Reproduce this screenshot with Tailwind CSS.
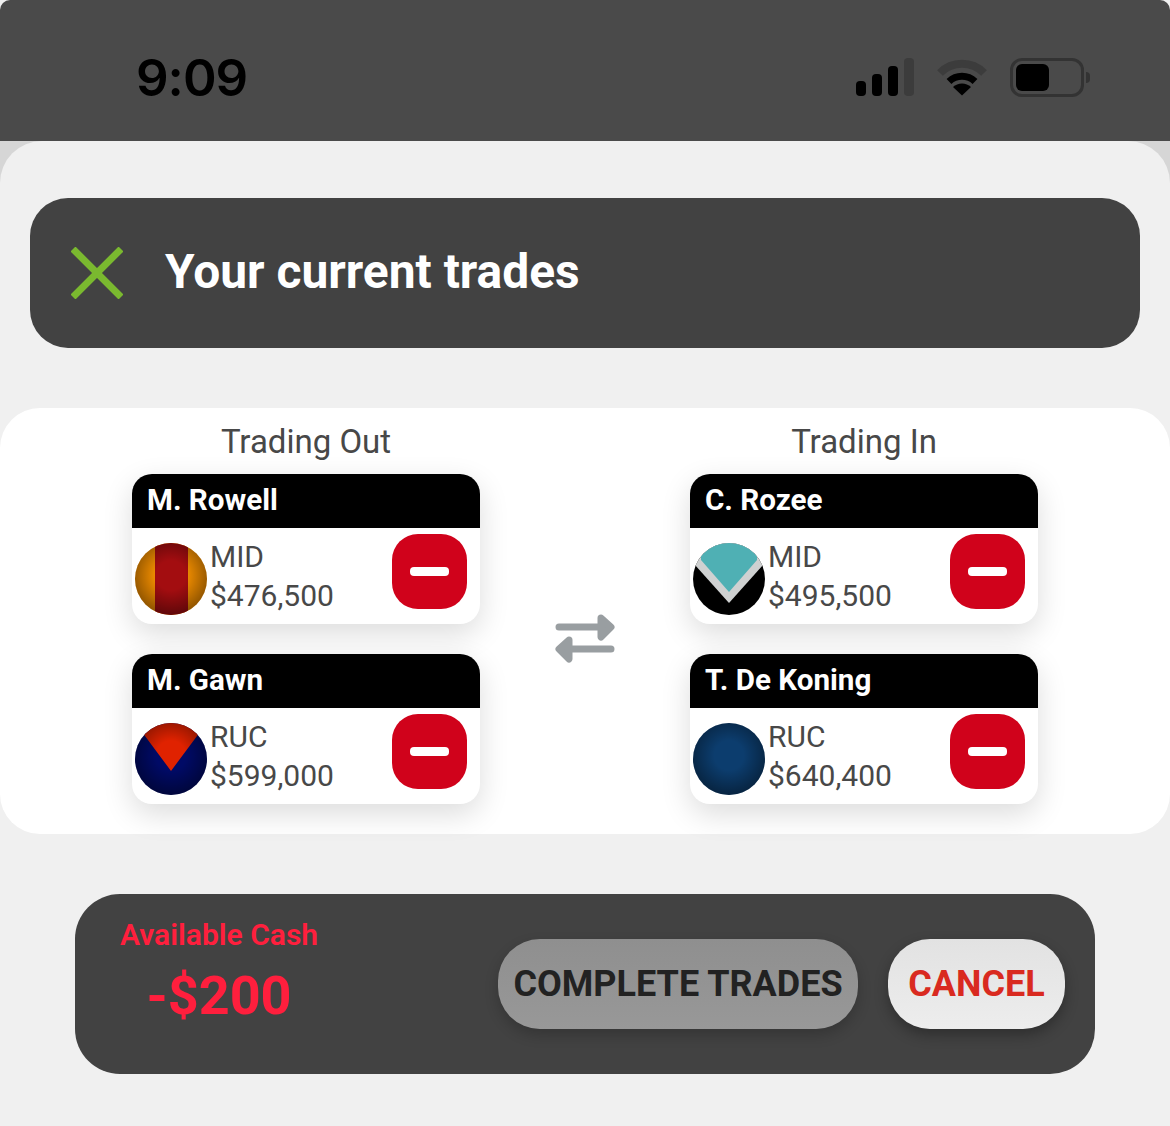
<!DOCTYPE html>
<html lang="en">
<head>
  <meta charset="UTF-8" />
  <meta name="viewport" content="width=device-width, initial-scale=1.0" />
  <title>Your current trades</title>
  <script src="https://cdn.jsdelivr.net/npm/@tailwindcss/browser@4"></script>
</head>
<body class="bg-[#f0f0f0] font-['Roboto',sans-serif] h-[1126px] overflow-hidden">
  <!-- status bar -->
  <div class="h-[141px] bg-[#4a4a4a] rounded-t-[10px] flex items-center justify-between pl-[136px] pr-[80px] pt-[13px]">
    <div class="font-['Inter',sans-serif] font-semibold text-[51px] leading-none text-black tracking-[-1px]">9:09</div>
    <div class="flex items-center gap-[23px]">
      <svg width="58" height="38" viewBox="0 0 58 38">
        <rect x="0" y="23" width="10" height="15" rx="4" fill="#000" />
        <rect x="16" y="16" width="10" height="22" rx="4" fill="#000" />
        <rect x="32" y="8" width="10" height="30" rx="4" fill="#000" />
        <rect x="48" y="0" width="10" height="38" rx="4" fill="#3c3c3c" />
      </svg>
      <svg width="50" height="38" viewBox="0 0 50 38">
        <path d="M3 15 A31 31 0 0 1 47 15" fill="none" stroke="#3c3c3c" stroke-width="8" />
        <path d="M12 23.5 A19 19 0 0 1 38 23.5" fill="none" stroke="#000" stroke-width="7" />
        <path d="M25 37.5 L16 29 A13 13 0 0 1 34 29 Z" fill="#000" />
      </svg>
      <div class="flex items-center gap-[2px]">
        <div class="w-[74px] h-[39px] rounded-[12px] border-[3px] border-[#333] p-[3px]">
          <div class="w-[33px] h-full rounded-[6px] bg-black"></div>
        </div>
        <div class="w-[4px] h-[11px] rounded-r-full bg-[#333]"></div>
      </div>
    </div>
  </div>

  <div class="bg-[#d6d6d6]">
    <div class="bg-[#f0f0f0] rounded-t-[42px] pt-[57px] h-[985px]">
      <!-- header -->
      <div class="mx-[30px] h-[150px] rounded-[38px] bg-[#424242] flex items-center pl-[41px] gap-[42px]">
        <svg width="52" height="52" viewBox="0 0 52 52">
          <path d="M2 2 L50 50 M50 2 L2 50" stroke="#7ab92f" stroke-width="7" fill="none" />
        </svg>
        <h1 class="text-[47.9px] font-bold text-white leading-none">Your current trades</h1>
      </div>

      <!-- trades -->
      <div class="mt-[60px] h-[426px] bg-white rounded-[40px] flex pl-[132px]">
        <div class="w-[348px]">
          <div class="h-[66px] pt-[15px] text-center text-[33px] leading-[38px] text-[#484848]">Trading Out</div>
          <div class="flex flex-col gap-[30px]">
            <div class="h-[150px] rounded-[20px] bg-white overflow-hidden shadow-[0_10px_30px_rgba(0,0,0,0.14)]">
              <div class="h-[54px] bg-black pl-[15px] pb-[2px] flex items-center text-[29.6px] font-bold text-white">M. Rowell</div>
              <div class="flex items-center pl-[3px] pr-[13px] h-[96px]">
                <svg class="mt-[6px]" width="72" height="72" viewBox="0 0 72 72">
                  <defs>
                    <radialGradient id="shade" cx="50%" cy="45%" r="58%">
                      <stop offset="35%" stop-color="#000" stop-opacity="0" />
                      <stop offset="100%" stop-color="#000" stop-opacity="0.45" />
                    </radialGradient>
                    <clipPath id="disc"><circle cx="36" cy="36" r="36" /></clipPath>
                  </defs>
                  <g clip-path="url(#disc)">
                    <rect width="72" height="72" fill="#f28e00" />
                    <rect x="20" width="33" height="72" fill="#a30d10" />
                    <rect width="72" height="72" fill="url(#shade)" />
                  </g>
                </svg>
                <div class="ml-[3px] text-[30px] leading-[39px] text-[#484848] mt-[-1px]">
                  <div>MID</div>
                  <div>$476,500</div>
                </div>
                <button class="ml-auto mt-[-10px] w-[75px] h-[75px] rounded-[26px] bg-[#d0021b] flex items-center justify-center">
                  <span class="block w-[39px] h-[9px] rounded-[4px] bg-white"></span>
                </button>
              </div>
            </div>
            <div class="h-[150px] rounded-[20px] bg-white overflow-hidden shadow-[0_10px_30px_rgba(0,0,0,0.14)]">
              <div class="h-[54px] bg-black pl-[15px] pb-[2px] flex items-center text-[29.6px] font-bold text-white">M. Gawn</div>
              <div class="flex items-center pl-[3px] pr-[13px] h-[96px]">
                <svg class="mt-[6px]" width="72" height="72" viewBox="0 0 72 72">
                  <g clip-path="url(#disc)">
                    <rect width="72" height="72" fill="#000a66" />
                    <path d="M4 5 L10 13 L36 48 L62 13 L68 5 L36 -4 Z" fill="#e02200" />
                    <rect width="72" height="72" fill="url(#shade)" />
                  </g>
                </svg>
                <div class="ml-[3px] text-[30px] leading-[39px] text-[#484848] mt-[-1px]">
                  <div>RUC</div>
                  <div>$599,000</div>
                </div>
                <button class="ml-auto mt-[-10px] w-[75px] h-[75px] rounded-[26px] bg-[#d0021b] flex items-center justify-center">
                  <span class="block w-[39px] h-[9px] rounded-[4px] bg-white"></span>
                </button>
              </div>
            </div>
          </div>
        </div>

        <div class="w-[210px] flex items-center justify-center pt-[34px]">
          <svg width="62" height="50" viewBox="0 0 62 50">
            <path d="M5 14 H46 M47 5 L57 14 L47 24 Z" fill="#999ea1" stroke="#999ea1" stroke-width="7" stroke-linejoin="round" stroke-linecap="round" />
            <path d="M57 36 H16 M15 27 L5 36 L15 46 Z" fill="#999ea1" stroke="#999ea1" stroke-width="7" stroke-linejoin="round" stroke-linecap="round" />
          </svg>
        </div>

        <div class="w-[348px]">
          <div class="h-[66px] pt-[15px] text-center text-[33px] leading-[38px] text-[#484848]">Trading In</div>
          <div class="flex flex-col gap-[30px]">
            <div class="h-[150px] rounded-[20px] bg-white overflow-hidden shadow-[0_10px_30px_rgba(0,0,0,0.14)]">
              <div class="h-[54px] bg-black pl-[15px] pb-[2px] flex items-center text-[29.6px] font-bold text-white">C. Rozee</div>
              <div class="flex items-center pl-[3px] pr-[13px] h-[96px]">
                <svg class="mt-[6px]" width="72" height="72" viewBox="0 0 72 72">
                  <g clip-path="url(#disc)">
                    <rect width="72" height="72" fill="#000" />
                    <path d="M2 22 L36 60 L70 22 L70 -2 L2 -2 Z" fill="#cfd1d1" />
                    <path d="M8 17 L36 49 L64 17 L64 -2 L8 -2 Z" fill="#4fb0b4" />
                  </g>
                </svg>
                <div class="ml-[3px] text-[30px] leading-[39px] text-[#484848] mt-[-1px]">
                  <div>MID</div>
                  <div>$495,500</div>
                </div>
                <button class="ml-auto mt-[-10px] w-[75px] h-[75px] rounded-[26px] bg-[#d0021b] flex items-center justify-center">
                  <span class="block w-[39px] h-[9px] rounded-[4px] bg-white"></span>
                </button>
              </div>
            </div>
            <div class="h-[150px] rounded-[20px] bg-white overflow-hidden shadow-[0_10px_30px_rgba(0,0,0,0.14)]">
              <div class="h-[54px] bg-black pl-[15px] pb-[2px] flex items-center text-[29.6px] font-bold text-white">T. De Koning</div>
              <div class="flex items-center pl-[3px] pr-[13px] h-[96px]">
                <svg class="mt-[6px]" width="72" height="72" viewBox="0 0 72 72">
                  <g clip-path="url(#disc)">
                    <rect width="72" height="72" fill="#0c3d6e" />
                    <rect width="72" height="72" fill="url(#shade)" />
                  </g>
                </svg>
                <div class="ml-[3px] text-[30px] leading-[39px] text-[#484848] mt-[-1px]">
                  <div>RUC</div>
                  <div>$640,400</div>
                </div>
                <button class="ml-auto mt-[-10px] w-[75px] h-[75px] rounded-[26px] bg-[#d0021b] flex items-center justify-center">
                  <span class="block w-[39px] h-[9px] rounded-[4px] bg-white"></span>
                </button>
              </div>
            </div>
          </div>
        </div>
      </div>

      <!-- footer bar -->
      <div class="mt-[60px] mx-[75px] h-[180px] rounded-[45px] bg-[#424242] flex items-center pl-[45px] pr-[30px]">
        <div class="w-[288px] mt-[-23px]">
          <div class="w-[198px] text-center text-[30px] leading-[36px] font-semibold text-[#ff1f3d] whitespace-nowrap">Available Cash</div>
          <div class="w-[198px] mt-[11px] text-center text-[54px] leading-[64px] font-bold text-[#ff1f3d]">-$200</div>
        </div>
        <button class="ml-auto w-[360px] h-[90px] rounded-[42px] bg-gradient-to-b from-[#8f8f8f] to-[#989898] text-[36px] font-bold text-[#222] shadow-[0_6px_14px_rgba(0,0,0,0.2)]">COMPLETE TRADES</button>
        <button class="ml-[30px] w-[177px] h-[90px] rounded-[42px] bg-gradient-to-b from-[#e2e2e2] to-[#ededed] text-[36px] font-bold text-[#d92a20] shadow-[0_6px_14px_rgba(0,0,0,0.3)]">CANCEL</button>
      </div>
    </div>
  </div>
</body>
</html>
